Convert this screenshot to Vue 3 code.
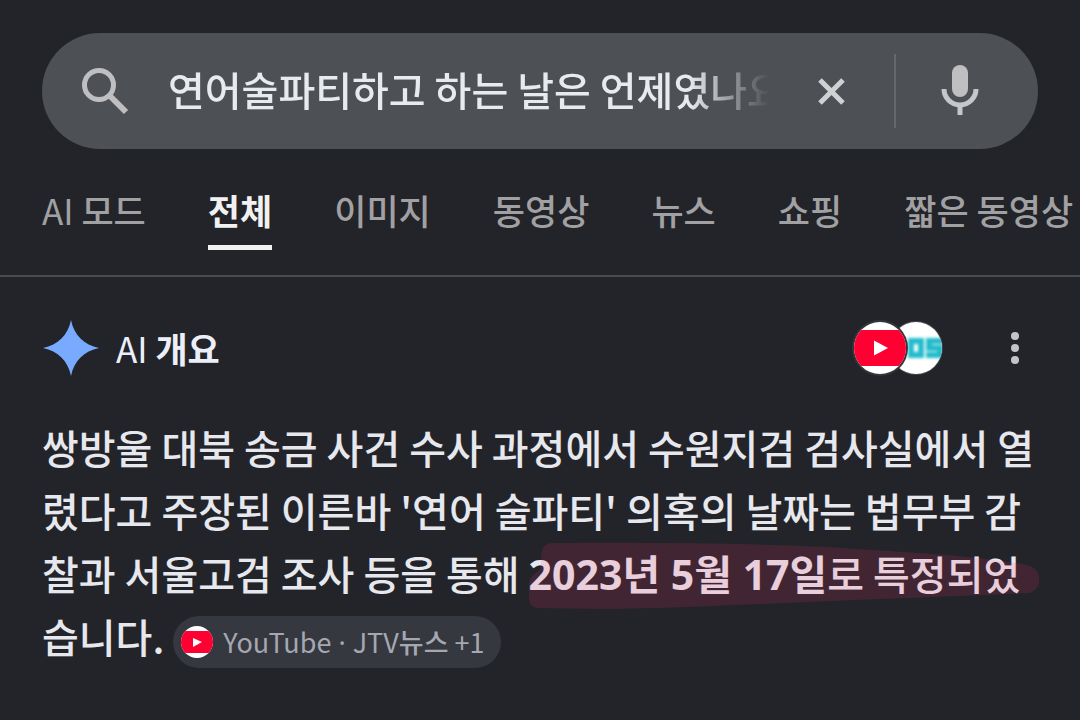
<script setup>
import { ref } from 'vue'

const query = ref('연어술파티하고 하는 날은 언제였나요')
const tabs = [
  { latin: 'AI ', label: '모드' },
  { label: '전체' },
  { label: '이미지' },
  { label: '동영상' },
  { label: '뉴스' },
  { label: '쇼핑' },
  { label: '짧은 동영상' },
]
const active = ref('전체')
</script>

<template>
  <div class="page">
    <header>
      <form class="search" role="search" @submit.prevent>
        <button class="icon-btn submit" type="submit" aria-label="검색">
          <svg width="48" height="48" viewBox="0 0 48 48" fill="none" stroke="#bfbfc1">
            <circle cx="18" cy="18" r="14.5" stroke-width="5" />
            <path d="M28 28 45 45" stroke-width="6" />
          </svg>
        </button>
        <input v-model="query" class="query" type="text" aria-label="검색어" />
        <button class="icon-btn clear" type="button" aria-label="지우기">
          <svg width="28" height="28" viewBox="0 0 28 28" fill="none" stroke="#d0d1d3" stroke-width="5">
            <path d="M2 3 25 26M25 3 2 26" />
          </svg>
        </button>
        <span class="divider"></span>
        <button class="icon-btn mic" type="button" aria-label="음성 검색">
          <svg width="38" height="52" viewBox="0 0 38 52">
            <rect x="11" y="0" width="16" height="32" rx="8" fill="#bfbfc1" />
            <path d="M3 24a16 16 0 0 0 32 0M19 40v10" fill="none" stroke="#c6c7c9" stroke-width="5" />
          </svg>
        </button>
      </form>
      <nav class="tabs">
        <a v-for="t in tabs" :key="t.label" href="#" :class="{ active: t.label === active }" @click.prevent="active = t.label"><span v-if="t.latin" class="latin">{{ t.latin }}</span>{{ t.label }}</a>
      </nav>
    </header>

    <main>
      <div class="overview-head">
        <svg class="spark" width="58" height="58" viewBox="0 0 58 58">
          <path d="M29 1C32 16 42 26 57 29C42 32 32 42 29 57C26 42 16 32 1 29C16 26 26 16 29 1Z" fill="#78aaff" />
        </svg>
        <h1><span class="latin">AI </span>개요</h1>
        <button class="sources" type="button" aria-label="출처">
          <svg width="92" height="56" viewBox="0 0 92 56">
            <defs>
              <clipPath id="c1"><circle cx="28" cy="28" r="26" /></clipPath>
              <clipPath id="c2"><circle cx="64" cy="28" r="26" /></clipPath>
              <filter id="soft" x="-20%" y="-40%" width="140%" height="180%"><feGaussianBlur stdDeviation="1.8" /></filter>
            </defs>
            <circle cx="64" cy="28" r="27" fill="#45474f" />
            <circle cx="64" cy="28" r="26" fill="#fff" />
            <g clip-path="url(#c2)">
              <g filter="url(#soft)" fill="none" stroke="#22bccb" stroke-width="6">
                <path d="M59 21h10v14H59ZM91 21H77v7h11v7H74" />
              </g>
            </g>
            <circle cx="28" cy="28" r="28" fill="#34353c" />
            <circle cx="28" cy="28" r="26" fill="#fff" />
            <g clip-path="url(#c1)">
              <rect x="1" y="10" width="54" height="36" rx="7" fill="#ff0033" />
            </g>
            <path d="M22 20.500 36 28 22 35.500Z" fill="#fff" />
          </svg>
        </button>
        <button class="more" type="button" aria-label="더보기">
          <svg width="10" height="34" viewBox="0 0 10 34" fill="#c4c4c8">
            <circle cx="5" cy="5" r="4" /><circle cx="5" cy="17" r="4" /><circle cx="5" cy="29" r="4" />
          </svg>
        </button>
      </div>

      <p class="answer">
        쌍방울 대북 송금 사건 수사 과정에서 수원지검 검사실에서 열렸다고 주장된 이른바 '연어 술파티' 의혹의 날짜는 법무부 감찰과 서울고검 조사 등을 통해
        <span class="marked"><b>2023년 5월 17일</b>로 특정되었<svg class="marker" viewBox="0 0 512 68" preserveAspectRatio="none" aria-hidden="true">
            <path d="M14 8Q16 2 24 1Q190 0 300 5L420 13Q490 20 502 24Q512 28 512 38Q511 48 502 51Q430 54 350 57L160 65Q80 68 10 66Q1 65 1 56V44Q1 35 8 31Q14 28 13 20Z" fill="#ff2f6f" fill-opacity=".14" />
          </svg></span>습니다.
        <a class="chip" href="#" @click.prevent>
          <svg width="32" height="32" viewBox="0 0 32 32">
            <clipPath id="c3"><circle cx="16" cy="16" r="16" /></clipPath>
            <circle cx="16" cy="16" r="16" fill="#fff" />
            <rect x="0" y="5" width="32" height="22" rx="5" fill="#ff0033" clip-path="url(#c3)" />
            <path d="M12 12 21 16 12 21Z" fill="#fff" />
          </svg>
          <span>YouTube<span class="dot"> · </span>JTV<span class="medium">뉴스</span> +1</span>
        </a>
      </p>
    </main>
  </div>
</template>

<style>
body { margin: 0; background: #232429; }
</style>

<style scoped>
.page {
  min-height: 100vh;
  overflow: hidden;
  background: #232429;
  color: #e6e8ee;
  font-family: "Noto Sans CJK KR", "Noto Sans", sans-serif;
}
button { border: 0; padding: 0; background: none; cursor: pointer; }
svg { display: block; }
header { padding-top: 33px; border-bottom: 2px solid #4a4b50; }
.search {
  display: flex;
  align-items: center;
  height: 116px;
  margin: 0 42px;
  padding: 0 59px 0 39px;
  box-sizing: border-box;
  border-radius: 58px;
  background: #4d5055;
}
.icon-btn { flex: none; }
.query {
  flex: 1;
  min-width: 0;
  height: 64px;
  margin: 0 49px 0 39px;
  padding: 0 0 4px;
  border: 0;
  outline: 0;
  background: none;
  color: #e8eaed;
  font: 500 40px "Noto Sans CJK KR", sans-serif;
  -webkit-mask-image: linear-gradient(to left, transparent, #000 80px);
  mask-image: linear-gradient(to left, transparent, #000 80px);
}
.divider { flex: none; width: 2px; height: 74px; margin: 0 45px 0 48px; background: #65686d; }
.tabs {
  display: flex;
  gap: 62px;
  padding: 37px 0 25px 42px;
  white-space: nowrap;
}
.tabs a {
  flex: none;
  height: 59px;
  border-bottom: 5px solid transparent;
  color: #a1a1a3;
  font-size: 35px;
  font-weight: 500;
  line-height: 48px;
  text-decoration: none;
}
.tabs a.active { color: #f1f1f1; border-color: #f1f1f1; font-weight: 700; }
.tabs a .latin, h1 .latin { font-weight: 400; }
.medium { font-weight: 500; }
main { padding: 42px 42px 0; }
.overview-head { display: flex; align-items: center; }
h1 { margin: 0 auto 0 16px; font-size: 35px; font-weight: 700; line-height: 58px; color: #eceffa; }
.more { margin: 0 18px 0 66px; }
.answer { margin: 39px 0 0; font-size: 40px; font-weight: 500; line-height: 63px; }
.marked { position: relative; }
.marked b { font-family: "Noto Sans", "Noto Sans CJK KR", sans-serif; font-size: 41px; line-height: 1; }
.marker { position: absolute; left: -1px; top: -2px; width: calc(100% + 20px); height: 68px; }
.chip {
  display: inline-flex;
  align-items: center;
  gap: 10px;
  height: 52px;
  padding: 0 16px 0 8px;
  border-radius: 26px;
  background: #36383f;
  color: #a5a8b2;
  font-size: 27px;
  font-weight: 400;
  line-height: 50px;
  vertical-align: middle;
  text-decoration: none;
}
.dot { font-family: "Noto Sans", sans-serif; line-height: 1; }
</style>
